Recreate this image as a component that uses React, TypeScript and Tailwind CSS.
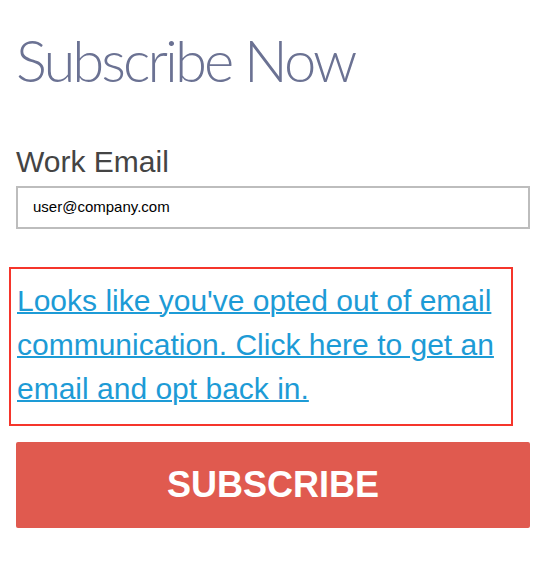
import React from "react";

const arial = { fontFamily: '"Liberation Sans", Arial, sans-serif' };

export default function App() {
  return (
    <div className="h-[570px] w-[552px] bg-white px-4" style={arial}>
      <h1
        className="pt-[31px] text-[58px] font-light leading-[58px] tracking-[-2.95px] text-[#6b7293]"
        style={{ fontFamily: "Lato, sans-serif" }}
      >
        Subscribe Now
      </h1>

      <label className="mt-[58px] block text-[30px] leading-[30px] text-[#444444]">Work Email</label>
      <div className="mt-[9px] flex h-[43px] w-[514px] items-center border-2 border-[#bdbdbd] px-[15px] text-[15px] text-black">
        user@company.com
      </div>

      <div className="-ml-[7px] mt-[38px] w-[504px] border-2 border-[#f5352b] px-[6px] pb-[13px] pt-[10px]">
        <a
          href="#"
          className="text-[30px] leading-[44px] text-[#1d9bd6] underline decoration-2"
        >
          Looks like you've opted out of email communication. Click here to get an email and opt back in.
        </a>
      </div>

      <button className="mt-[16px] flex h-[86px] w-[514px] items-center justify-center rounded-[2px] bg-[#e05a4f] text-[36px] font-bold text-white">
        SUBSCRIBE
      </button>
    </div>
  );
}
